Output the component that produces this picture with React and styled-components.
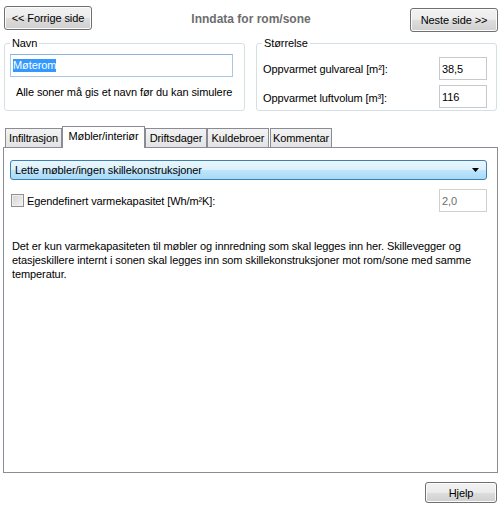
import React from 'react'
import styled, { createGlobalStyle, css } from 'styled-components'

const GlobalStyle = createGlobalStyle`
  html, body {
    margin: 0;
    padding: 0;
    background: #fff;
  }
  body {
    font-family: "Liberation Sans", Arial, sans-serif;
    font-size: 11px;
    letter-spacing: -0.1px;
    color: #000;
  }
  * { box-sizing: border-box; }
`

const Page = styled.div`
  width: 503px;
  height: 511px;
  display: flex;
  flex-direction: column;
  background: #fff;
  overflow: hidden;
`

const TopBar = styled.div`
  display: grid;
  grid-template-columns: auto 1fr auto;
  align-items: start;
  height: 37px;
  padding: 0 5px 0 4px;
`

const WinButton = styled.button`
  width: ${({ $w }) => $w}px;
  height: ${({ $h }) => $h || 24}px;
  margin-top: ${({ $top }) => $top || 0}px;
  padding: 0;
  font: inherit;
  font-size: 11px;
  letter-spacing: -0.1px;
  color: #000;
  border: 1px solid #707070;
  border-radius: 3px;
  background: linear-gradient(#f2f2f2 0%, #ebebeb 50%, #dddddd 51%, #cfcfcf 100%);
  box-shadow: inset 0 0 0 1px #fbfbfb;
`

const Title = styled.h1`
  margin: 6px 0 0;
  line-height: 26px;
  text-align: center;
  font-size: 12px;
  font-weight: bold;
  letter-spacing: 0;
  color: #6d6d6d;
`

const GroupRow = styled.div`
  display: flex;
  gap: 11px;
  padding: 0 6px 0 4px;
`

const Group = styled.fieldset`
  width: 241px;
  min-width: 0;
  margin: 0;
  padding: ${({ $pad }) => $pad};
  border: 1px solid #d5dfe5;
  border-radius: 3px;
`

const Legend = styled.legend`
  padding: 0 2px;
  line-height: 13px;
  font-size: 11px;
`

const textBox = css`
  height: 23px;
  padding: 0 2px;
  display: flex;
  align-items: center;
  font-size: 11px;
  background: #fff;
  border: 1px solid #c6c9cf;
  border-top-color: #abadb3;
`

const NameBox = styled.div`
  ${textBox}
  width: 223px;
  border-color: #a9c7e6;
  border-top-color: #8eb2d9;
`

const Selection = styled.span`
  background: #3399ff;
  color: #fff;
  line-height: 13px;
`

const Hint = styled.p`
  margin: 9px 0 0 6px;
  line-height: 13px;
  white-space: nowrap;
`

const SizeGrid = styled.div`
  display: grid;
  grid-template-columns: 1fr 48px;
  row-gap: 5px;
  align-items: center;
`

const FieldLabel = styled.span`
  padding-left: 1px;
  padding-top: ${({ $down }) => $down || 0}px;
`

const NumberBox = styled.div`
  ${textBox}
  width: 48px;
  color: ${({ $disabled }) => ($disabled ? '#6d6d6d' : '#000')};
  border-color: ${({ $disabled }) => ($disabled ? '#d0d0d0' : '#c6c9cf')};
`

const TabStrip = styled.div`
  display: flex;
  align-items: flex-end;
  height: 21px;
  margin-top: 15px;
  padding-left: 5px;
  position: relative;
  z-index: 1;
`

const Tab = styled.div`
  width: ${({ $w }) => $w}px;
  height: 19px;
  display: flex;
  align-items: center;
  justify-content: center;
  border: 1px solid #898c95;
  border-bottom: none;
  background: linear-gradient(#f3f3f3, #e3e3e3);
  margin-right: ${({ $gap }) => $gap || 0}px;
  ${({ $active }) =>
    $active &&
    css`
      height: 22px;
      margin-bottom: -1px;
      padding-bottom: 3px;
      background: #fff;
    `}
`

const Panel = styled.div`
  flex: 1;
  display: flex;
  flex-direction: column;
  margin: 0 5px 0 3px;
  padding: 12px 10px 0 6px;
  border: 1px solid #898c95;
`

const ComboBox = styled.div`
  height: 20px;
  display: flex;
  align-items: center;
  justify-content: space-between;
  padding: 0 7px 0 4px;
  border: 1px solid #3c7fb1;
  border-radius: 3px;
  background: linear-gradient(#eaf6fd 0%, #d9f0fc 50%, #bee6fd 52%, #a7d9f5 100%);
`

const CheckRow = styled.div`
  display: flex;
  align-items: center;
  margin-top: 9px;
`

const CheckBox = styled.span`
  width: 13px;
  height: 13px;
  margin-left: 1px;
  border: 1px solid #8f8f8f;
  background: linear-gradient(135deg, #d2d2d2, #f4f4f4);
  box-shadow: inset 0 0 0 1px #f0f0f0;
`

const CheckLabel = styled.span`
  margin-left: 3px;
  flex: 1;
`

const Info = styled.p`
  margin: 27px 0 0 2px;
  line-height: 14px;
`

const Footer = styled.div`
  display: flex;
  justify-content: flex-end;
  padding: 9px 6px 8px 0;
`

const tabs = [
  { label: 'Infiltrasjon', w: 57 },
  { label: 'Møbler/interiør', w: 83, active: true },
  { label: 'Driftsdager', w: 62, gap: 0 },
  { label: 'Kuldebroer', w: 62, gap: 1 },
  { label: 'Kommentar', w: 62 },
]

const App = () => {
  return (
    <Page>
      <GlobalStyle />
      <TopBar>
        <WinButton $w={88} $top={6}>&lt;&lt; Forrige side</WinButton>
        <Title>Inndata for rom/sone</Title>
        <WinButton $w={88} $top={8}>Neste side &gt;&gt;</WinButton>
      </TopBar>

      <GroupRow>
        <Group $pad="4px 11px 11px 5px">
          <Legend>Navn</Legend>
          <NameBox>
            <Selection>Møterom</Selection>
          </NameBox>
          <Hint>Alle soner må gis et navn før du kan simulere</Hint>
        </Group>

        <Group $pad="7px 9px 2px 5px">
          <Legend>Størrelse</Legend>
          <SizeGrid>
            <FieldLabel>Oppvarmet gulvareal [m²]:</FieldLabel>
            <NumberBox>38,5</NumberBox>
            <FieldLabel $down={2}>Oppvarmet luftvolum [m³]:</FieldLabel>
            <NumberBox>116</NumberBox>
          </SizeGrid>
        </Group>
      </GroupRow>

      <TabStrip>
        {tabs.map((t) => (
          <Tab key={t.label} $w={t.w} $active={t.active} $gap={t.gap}>
            {t.label}
          </Tab>
        ))}
      </TabStrip>

      <Panel>
        <ComboBox>
          <span>Lette møbler/ingen skillekonstruksjoner</span>
          <svg width="7" height="4" viewBox="0 0 7 4">
            <polygon points="0,0 7,0 3.5,4" fill="#000" />
          </svg>
        </ComboBox>

        <CheckRow>
          <CheckBox />
          <CheckLabel>Egendefinert varmekapasitet [Wh/m²K]:</CheckLabel>
          <NumberBox $disabled>2,0</NumberBox>
        </CheckRow>

        <Info>
          Det er kun varmekapasiteten til møbler og innredning som skal legges inn her. Skillevegger og
          etasjeskillere internt i sonen skal legges inn som skillekonstruksjoner mot rom/sone med samme
          temperatur.
        </Info>
      </Panel>

      <Footer>
        <WinButton $w={72} $h={21}>Hjelp</WinButton>
      </Footer>
    </Page>
  )
}

export default App
